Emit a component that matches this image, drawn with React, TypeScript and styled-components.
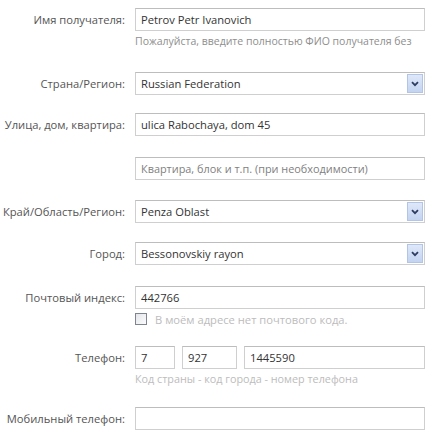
import React from "react";
import styled, { createGlobalStyle } from "styled-components";

const Global = createGlobalStyle`
  html, body { margin: 0; padding: 0; background: #fff; }
  body { font-family: "Open Sans", "Noto Sans", "DejaVu Sans", sans-serif; }
`;

const Form = styled.div`
  padding-top: 8px;
  width: 434px;
  display: flex;
  flex-direction: column;
`;

const Row = styled.div<{ $mb: number }>`
  display: grid;
  grid-template-columns: 125px 290px;
  column-gap: 10px;
  align-items: start;
  margin-bottom: ${(p) => p.$mb}px;
`;

const Label = styled.label`
  grid-column: 1;
  height: 23px;
  display: flex;
  align-items: center;
  justify-content: flex-end;
  font-size: 11.2px;
  color: #555;
  white-space: nowrap;
`;

const Field = styled.div`
  grid-column: 2;
  display: flex;
  flex-direction: column;
`;

const TextInput = styled.input<{ $w?: number }>`
  box-sizing: border-box;
  width: ${(p) => (p.$w ? `${p.$w}px` : "100%")};
  height: 23px;
  margin: 0;
  padding: 0 5px;
  border: 1px solid #cfcfcf;
  border-top-color: #bdbdbd;
  background: #fff;
  font-family: inherit;
  font-size: 11.2px;
  color: #333;
  outline: none;
  &::placeholder { color: #808080; font-size: 10.9px; }
`;

const Select = styled.div`
  box-sizing: border-box;
  width: 100%;
  height: 23px;
  border: 1px solid #cfcfcf;
  border-top-color: #bdbdbd;
  background: #fff;
  display: flex;
  align-items: center;
  justify-content: space-between;
  padding: 0 1px 0 5px;
  font-size: 11.2px;
  color: #333;
`;

const ArrowBox = styled.span`
  box-sizing: border-box;
  width: 16px;
  height: 19px;
  border: 1px solid #b3c5e6;
  background: linear-gradient(#dfe8f9, #c3d3f1);
  display: flex;
  align-items: center;
  justify-content: center;
`;

const Hint = styled.div<{ $light?: boolean }>`
  margin-top: ${(p) => (p.$light ? 2 : 3)}px;
  font-size: ${(p) => (p.$light ? 10.8 : 10.5)}px;
  line-height: 15px;
  color: ${(p) => (p.$light ? "#bcbcbc" : "#8e8e8e")};
  white-space: nowrap;
  overflow: hidden;
`;

const CheckRow = styled.div`
  margin-top: 3px;
  display: flex;
  align-items: center;
  gap: 8px;
  height: 14px;
`;

const Box = styled.span`
  box-sizing: border-box;
  flex: none;
  width: 12px;
  height: 12px;
  border: 1px solid #7d8590;
  background: linear-gradient(135deg, #e4e6ea, #fbfbfc);
`;

const CheckText = styled.span`
  font-size: 11.2px;
  color: #bcbcbc;
  white-space: nowrap;
`;

const PhoneRow = styled.div`
  display: flex;
  gap: 7px;
`;

const Arrow = () => (
  <ArrowBox>
    <svg width="8" height="6" viewBox="0 0 8 6">
      <path d="M1 1.2 L4 4.2 L7 1.2" stroke="#2f3c62" strokeWidth="1.8" fill="none" />
    </svg>
  </ArrowBox>
);

const SelectField = ({ value }: { value: string }) => (
  <Select>
    <span>{value}</span>
    <Arrow />
  </Select>
);

export default function App() {
  return (
    <>
      <Global />
      <Form>
        <Row $mb={23}>
          <Label>Имя получателя:</Label>
          <Field>
            <TextInput defaultValue="Petrov Petr Ivanovich" />
            <Hint>Пожалуйста, введите полностью ФИО получателя без</Hint>
          </Field>
        </Row>
        <Row $mb={18}>
          <Label>Страна/Регион:</Label>
          <Field>
            <SelectField value="Russian Federation" />
          </Field>
        </Row>
        <Row $mb={21}>
          <Label>Улица, дом, квартира:</Label>
          <Field>
            <TextInput defaultValue="ulica Rabochaya, dom 45" />
          </Field>
        </Row>
        <Row $mb={20}>
          <Field>
            <TextInput placeholder="Квартира, блок и т.п. (при необходимости)" />
          </Field>
        </Row>
        <Row $mb={19}>
          <Label>Край/Область/Регион:</Label>
          <Field>
            <SelectField value="Penza Oblast" />
          </Field>
        </Row>
        <Row $mb={21}>
          <Label>Город:</Label>
          <Field>
            <SelectField value="Bessonovskiy rayon" />
          </Field>
        </Row>
        <Row $mb={20}>
          <Label>Почтовый индекс:</Label>
          <Field>
            <TextInput defaultValue="442766" />
            <CheckRow>
              <Box />
              <CheckText>В моём адресе нет почтового кода.</CheckText>
            </CheckRow>
          </Field>
        </Row>
        <Row $mb={21}>
          <Label>Телефон:</Label>
          <Field>
            <PhoneRow>
              <TextInput $w={40} defaultValue="7" />
              <TextInput $w={55} defaultValue="927" />
              <TextInput $w={181} defaultValue="1445590" />
            </PhoneRow>
            <Hint $light>Код страны - код города - номер телефона</Hint>
          </Field>
        </Row>
        <Row $mb={0}>
          <Label>Мобильный телефон:</Label>
          <Field>
            <TextInput />
          </Field>
        </Row>
      </Form>
    </>
  );
}
